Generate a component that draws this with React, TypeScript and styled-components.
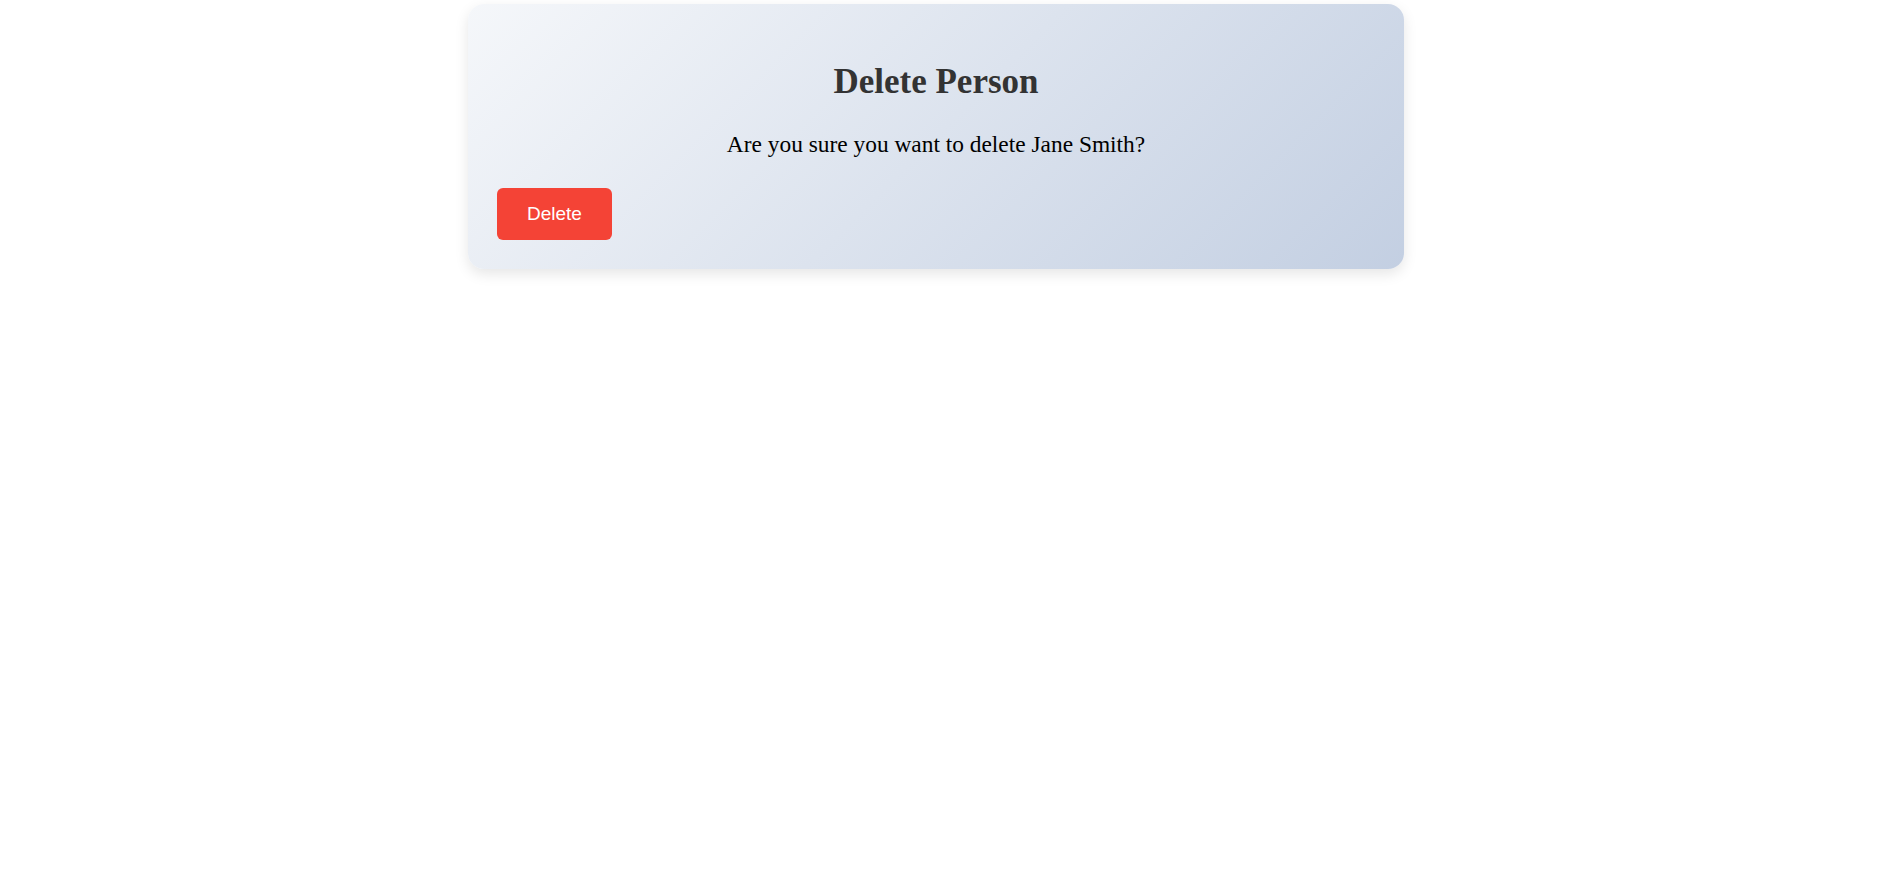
import React from "react";
import styled, { createGlobalStyle } from "styled-components";

const GlobalStyle = createGlobalStyle`
  html, body {
    margin: 0;
    padding: 0;
    background: #ffffff;
  }
  body {
    font-family: "Liberation Serif", "Times New Roman", serif;
  }
`;

const Page = styled.div`
  display: flex;
  justify-content: center;
  padding: 4px 7px 0 0;
  min-height: 878px;
`;

const Card = styled.div`
  width: 50%;
  box-sizing: border-box;
  height: 265px;
  padding: 28px 29px;
  border-radius: 16px;
  background: linear-gradient(135deg, #f5f7fa 0%, #c3cfe2 100%);
  box-shadow: 0 5px 14px rgba(0, 0, 0, 0.1);
  display: flex;
  flex-direction: column;
  align-items: flex-start;
`;

const Title = styled.h2`
  align-self: stretch;
  margin: 30px 0 29px;
  text-align: center;
  font-family: "Liberation Serif", "Times New Roman", serif;
  font-size: 35px;
  font-weight: 700;
  color: #333333;
  line-height: normal;
`;

const Message = styled.p`
  align-self: stretch;
  margin: 0 0 30px;
  text-align: center;
  font-family: "Liberation Serif", "Times New Roman", serif;
  font-size: 23.4px;
  color: #000000;
  line-height: normal;
`;

const DeleteButton = styled.button`
  height: 52px;
  padding: 0 30px;
  border: none;
  border-radius: 6px;
  background: #f44336;
  color: #ffffff;
  font-family: "Liberation Sans", Arial, sans-serif;
  font-size: 19px;
  cursor: pointer;
`;

const App: React.FC = () => {
  const person = { name: "Jane Smith" };

  return (
    <>
      <GlobalStyle />
      <Page>
        <Card>
          <Title>Delete Person</Title>
          <Message>Are you sure you want to delete {person.name}?</Message>
          <DeleteButton>Delete</DeleteButton>
        </Card>
      </Page>
    </>
  );
};

export default App;
